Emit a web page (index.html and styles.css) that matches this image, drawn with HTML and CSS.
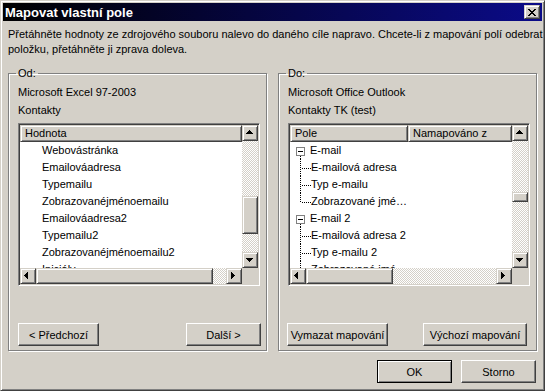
FILE: index.html
```html
<!DOCTYPE html>
<html lang="cs">
<head>
  <meta charset="UTF-8">
  <title>Mapovat vlastní pole</title>
  <link rel="stylesheet" href="styles.css">
</head>
<body>
<div class="window">
  <div class="titlebar">
    <span class="title">Mapovat vlastní pole</span>
    <button class="close raised" title="Zavřít">
      <svg width="8" height="7" viewBox="0 0 8 7"><path d="M0 0h2v1H0zM6 0h2v1H6zM1 1h2v1H1zM5 1h2v1H5zM2 2h4v1H2zM3 3h2v1H3zM2 4h4v1H2zM1 5h2v1H1zM5 5h2v1H5zM0 6h2v1H0zM6 6h2v1H6z"/></svg>
    </button>
  </div>
  <div class="body">
    <p class="intro">Přetáhněte hodnoty ze zdrojového souboru nalevo do daného cíle napravo. Chcete-li z mapování polí odebrat<br>položku, přetáhněte ji zprava doleva.</p>
    <div class="groups">
      <fieldset class="group">
        <legend>Od:</legend>
        <div class="info">Microsoft Excel 97-2003</div>
        <div class="info">Kontakty</div>
        <div class="listbox">
          <div class="listarea">
            <div class="header"><div class="hcol raised full">Hodnota</div></div>
            <div class="row">Webovástránka</div>
            <div class="row">Emailováadresa</div>
            <div class="row">Typemailu</div>
            <div class="row">Zobrazovanéjménoemailu</div>
            <div class="row">Emailováadresa2</div>
            <div class="row">Typemailu2</div>
            <div class="row">Zobrazovanéjménoemailu2</div>
            <div class="row">Iniciály</div>
          </div>
          <div class="vscroll">
            <div class="sbtn raised up"><svg width="7" height="4" viewBox="0 0 7 4"><path d="M3 0h1v1H3zM2 1h3v1H2zM1 2h5v1H1zM0 3h7v1H0z"/></svg></div>
            <div class="track"><div class="thumb raised src-v"></div></div>
            <div class="sbtn raised down"><svg width="7" height="4" viewBox="0 0 7 4"><path d="M0 0h7v1H0zM1 1h5v1H1zM2 2h3v1H2zM3 3h1v1H3z"/></svg></div>
          </div>
          <div class="hscroll">
            <div class="sbtn raised left"><svg width="4" height="7" viewBox="0 0 4 7"><path d="M3 0h1v7H3zM2 1h1v5H2zM1 2h1v3H1zM0 3h1v1H0z"/></svg></div>
            <div class="track"><div class="thumb raised src-h"></div></div>
            <div class="sbtn raised right"><svg width="4" height="7" viewBox="0 0 4 7"><path d="M0 0h1v7H0zM1 1h1v5H1zM2 2h1v3H2zM3 3h1v1H3z"/></svg></div>
          </div>
          <div class="corner"></div>
        </div>
        <div class="btnrow">
          <button class="btn prev">&lt; Předchozí</button>
          <button class="btn next">Další &gt;</button>
        </div>
      </fieldset>

      <fieldset class="group target">
        <legend>Do:</legend>
        <div class="info">Microsoft Office Outlook</div>
        <div class="info">Kontakty TK (test)</div>
        <div class="listbox">
          <div class="listarea">
            <div class="header">
              <div class="hcol raised c1">Pole</div>
              <div class="hcol raised c2">Namapováno z</div>
            </div>
            <div class="trow"><span class="toggle"><span class="box"></span></span><span class="tlabel">E-mail</span></div>
            <div class="trow"><span class="elbow"></span>E-mailová adresa</div>
            <div class="trow"><span class="elbow"></span>Typ e-mailu</div>
            <div class="trow"><span class="elbow last"></span>Zobrazované jmé…</div>
            <div class="trow"><span class="toggle"><span class="box"></span></span><span class="tlabel">E-mail 2</span></div>
            <div class="trow"><span class="elbow"></span>E-mailová adresa 2</div>
            <div class="trow"><span class="elbow"></span>Typ e-mailu 2</div>
            <div class="trow"><span class="elbow"></span>Zobrazované jmé…</div>
          </div>
          <div class="vscroll">
            <div class="sbtn raised up"><svg width="7" height="4" viewBox="0 0 7 4"><path d="M3 0h1v1H3zM2 1h3v1H2zM1 2h5v1H1zM0 3h7v1H0z"/></svg></div>
            <div class="track"><div class="thumb raised dst-v"></div></div>
            <div class="sbtn raised down"><svg width="7" height="4" viewBox="0 0 7 4"><path d="M0 0h7v1H0zM1 1h5v1H1zM2 2h3v1H2zM3 3h1v1H3z"/></svg></div>
          </div>
          <div class="hscroll">
            <div class="sbtn raised left"><svg width="4" height="7" viewBox="0 0 4 7"><path d="M3 0h1v7H3zM2 1h1v5H2zM1 2h1v3H1zM0 3h1v1H0z"/></svg></div>
            <div class="track"><div class="thumb raised dst-h"></div></div>
            <div class="sbtn raised right"><svg width="4" height="7" viewBox="0 0 4 7"><path d="M0 0h1v7H0zM1 1h1v5H1zM2 2h1v3H2zM3 3h1v1H3z"/></svg></div>
          </div>
          <div class="corner"></div>
        </div>
        <div class="btnrow">
          <button class="btn clear">Vymazat mapování</button>
          <button class="btn defaults">Výchozí mapování</button>
        </div>
      </fieldset>
    </div>
    <div class="actions">
      <button class="btn dlg default">OK</button>
      <button class="btn dlg">Storno</button>
    </div>
  </div>
</div>
</body>
</html>
```

FILE: styles.css
```css
* { box-sizing: border-box; }
body { margin: 0; background: #d4d0c8; font: 11px "Liberation Sans", Arial, sans-serif; color: #000; }
button { font: inherit; color: #000; margin: 0; padding: 0; }
svg { display: block; shape-rendering: crispEdges; }

/* window frame */
.window {
  width: 545px; height: 391px; padding: 2px; background: #d4d0c8;
  border: 1px solid; border-color: #d4d0c8 #404040 #404040 #d4d0c8;
  box-shadow: inset 1px 1px #fff, inset -1px -1px #808080;
}
.titlebar { height: 18px; display: flex; align-items: center; padding: 0 2px 0 2px; background: linear-gradient(to right, #000000, #0b0b88); }
.title { color: #fff; font-weight: bold; font-size: 13px; }
.close { margin-left: auto; width: 16px; height: 14px; display: flex; align-items: center; justify-content: center; padding: 0 1px 0 0; }

/* classic 3d edge */
.raised {
  background: #d4d0c8; border: 1px solid; border-color: #d4d0c8 #404040 #404040 #d4d0c8;
  box-shadow: inset 1px 1px #fff, inset -1px -1px #808080;
}

.body { padding: 6px 5px 0; }
.intro { margin: 0; line-height: 15px; white-space: nowrap; }

.groups { display: flex; gap: 11px; margin-top: 10px; }
.group {
  width: 259px; min-width: 0; margin: 0; padding: 3px 5px 4px 9px;
  border: 1px solid #808080; box-shadow: inset 1px 1px #fff, 1px 1px #fff;
}
.group legend { padding: 0 2px; margin-left: -2px; line-height: 13px; }
.info { height: 18px; line-height: 18px; white-space: nowrap; }

/* list view */
.listbox {
  width: 242px; height: 163px; margin-top: 4px; padding: 1px; background: #fff;
  border: 1px solid; border-color: #808080 #fff #fff #808080;
  box-shadow: inset 1px 1px #404040, inset -1px -1px #d4d0c8;
  display: grid; grid-template-columns: 1fr 16px; grid-template-rows: 1fr 16px;
}
.listarea { overflow: hidden; background: #fff; }
.header { display: flex; height: 17px; }
.hcol { line-height: 15px; padding-left: 4px; white-space: nowrap; }
.hcol.full { flex: 1; }
.hcol.c1 { width: 118px; }
.hcol.c2 { flex: 1; }
.row { height: 17px; line-height: 17px; padding-left: 22px; white-space: nowrap; }

/* tree */
.trow { display: flex; height: 17px; line-height: 17px; padding-left: 6px; white-space: nowrap; }
.toggle { flex: none; width: 9px; background: repeating-linear-gradient(#000 0 1px, transparent 1px 2px) 4px 14px / 1px 3px no-repeat; }
.box {
  display: block; width: 9px; height: 9px; margin-top: 5px; border: 1px solid #808080;
  background: linear-gradient(#000, #000) center / 5px 1px no-repeat, #fff;
}
.tlabel { margin-left: 5px; }
.elbow {
  flex: none; width: 15px;
  background:
    repeating-linear-gradient(to right, #000 0 1px, transparent 1px 2px) 6px 9px / 9px 1px no-repeat,
    repeating-linear-gradient(#000 0 1px, transparent 1px 2px) 4px 0 / 1px 17px no-repeat;
}
.elbow.last { background-size: 9px 1px, 1px 10px; }

/* scrollbars */
.vscroll { display: flex; flex-direction: column; }
.hscroll { display: flex; }
.track { flex: 1; display: flex; background: repeating-conic-gradient(#fff 0 25%, #d4d0c8 0 50%) 0 0 / 2px 2px; }
.vscroll .track { flex-direction: column; }
.sbtn { flex: none; width: 16px; height: 16px; }
.sbtn.up svg { margin: 4px 0 0 3px; }
.sbtn.down svg { margin: 5px 0 0 3px; }
.sbtn.left svg { margin: 3px 0 0 3px; }
.sbtn.right svg { margin: 3px 0 0 4px; }
.thumb { flex: none; }
.src-v { margin-top: 55px; height: 38px; }
.dst-v { margin-top: 51px; height: 10px; }
.src-h { width: 177px; }
.dst-h { width: 87px; }
.corner { background: #d4d0c8; }

/* push buttons */
.btn {
  height: 23px; background: #d4d0c8;
  border: 1px solid; border-color: #fff #404040 #404040 #fff;
  box-shadow: inset -1px -1px #808080;
}
.btn.default { border-color: #000; box-shadow: inset 1px 1px #fff, inset -1px -1px #808080; }
.btnrow { display: flex; justify-content: space-between; margin-top: 37px; }
.target .btnrow { width: 240px; margin-left: -1px; }
.prev { width: 81px; }
.next { width: 75px; }
.clear { width: 101px; }
.defaults { width: 104px; }
.dlg { width: 75px; }
.actions { display: flex; justify-content: flex-end; gap: 9px; margin-top: 9px; padding-right: 1px; }
```
